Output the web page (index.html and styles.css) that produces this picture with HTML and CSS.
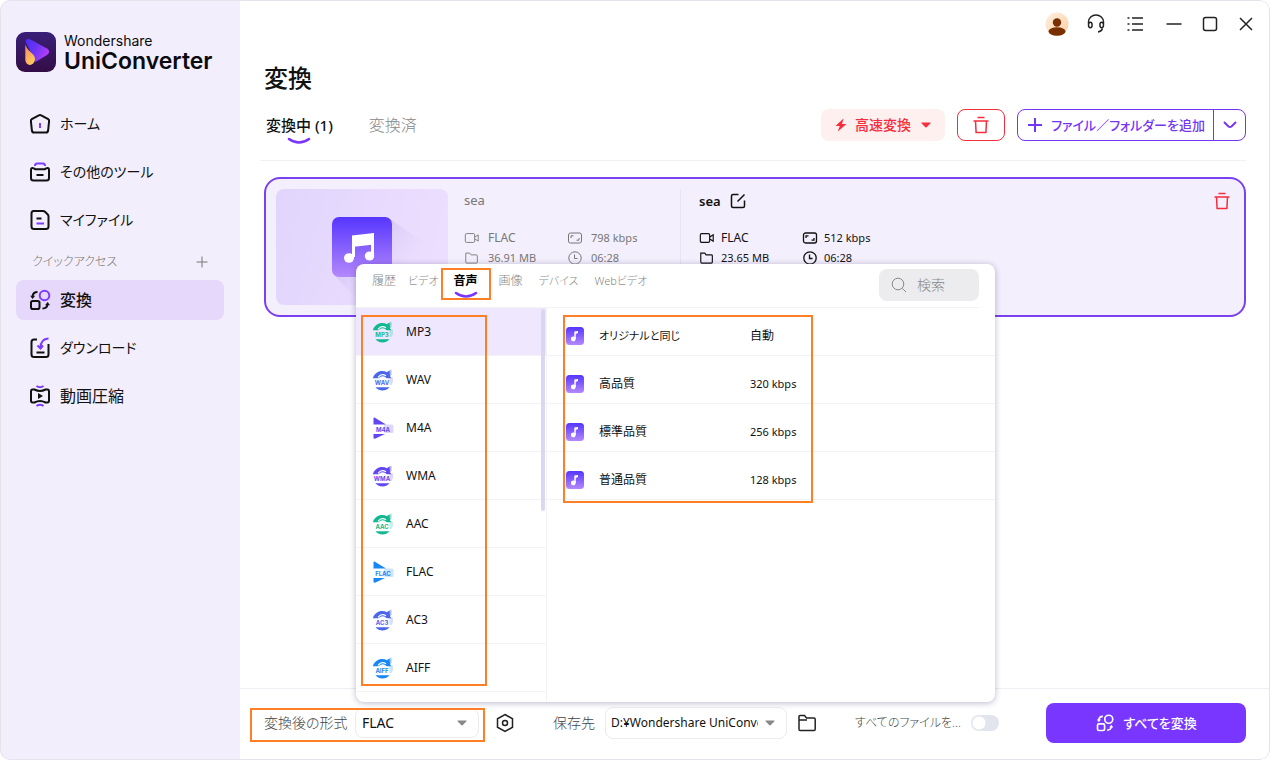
FILE: index.html
```html
<!DOCTYPE html>
<html lang="ja">
<head>
<meta charset="utf-8">
<meta name="viewport" content="width=device-width, initial-scale=1">
<title>Wondershare UniConverter</title>
<link rel="stylesheet" href="styles.css">
</head>
<body>
<svg class="defs" aria-hidden="true">
  <defs>
    <linearGradient id="g-note" x1="0" y1="0" x2="0" y2="1"><stop offset="0" stop-color="#5636ff"/><stop offset="1" stop-color="#b488fb"/></linearGradient>
    <linearGradient id="g-logo" x1="0" y1="0" x2="0" y2="1"><stop offset="0" stop-color="#3a1f78"/><stop offset="1" stop-color="#330d45"/></linearGradient>
    <linearGradient id="g-play" x1="0" y1="0" x2="1" y2="0.5"><stop offset="0" stop-color="#4a2bf0"/><stop offset="0.5" stop-color="#6b35f5"/><stop offset="1" stop-color="#b43cf5"/></linearGradient>
    <linearGradient id="g-drop" x1="0" y1="0" x2="0.6" y2="1"><stop offset="0" stop-color="#f0875c"/><stop offset="1" stop-color="#ffc860"/></linearGradient>
    <linearGradient id="g-shade" x1="0" y1="0" x2="1" y2="0.8"><stop offset="0.2" stop-color="#9d86d8" stop-opacity="0.3"/><stop offset="0.65" stop-color="#c9b5ee" stop-opacity="0"/></linearGradient>
    <linearGradient id="g-face" x1="0" y1="0" x2="1" y2="1"><stop offset="0" stop-color="#fff0e0"/><stop offset="1" stop-color="#ffcfa3"/></linearGradient>
  </defs>
  <symbol id="i-trash" viewBox="0 0 20 20"><path d="M6.500 2.500h7M2.500 6h15M4.500 6l.6 11.500h9.800L15.500 6" fill="none" stroke="currentColor" stroke-width="1.500"/></symbol>
  <symbol id="i-convert" viewBox="0 0 24 24"><rect x="3" y="13" width="8.500" height="8" rx="1.800" fill="none" stroke="currentColor" stroke-width="2"/><circle class="accent" cx="16.500" cy="7.500" r="4.800" fill="none" stroke-width="2"/><path d="M4.500 8.500C4.800 5.800 6.500 4 9.500 4M14.500 20.500c3 0 4.700-1.300 5-4" fill="none" stroke="currentColor" stroke-width="2"/><path d="M2.200 7.800h5L4.500 11zM17 17.300h5L19.700 14z" fill="currentColor" stroke="none"/></symbol>
  <symbol id="i-video" viewBox="0 0 18 14"><rect x="1.500" y="2" width="10.500" height="10" rx="1.500"/><path d="M12 6l4-2.500v7L12 8"/></symbol>
  <symbol id="i-folder" viewBox="0 0 18 14"><path d="M2 1.500h4.500l1.500 2h6a1 1 0 0 1 1 1v7a1.200 1.200 0 0 1-1.200 1.200H3A1.200 1.200 0 0 1 2 11.500z"/></symbol>
  <symbol id="i-rate" viewBox="0 0 16 14"><rect x="1.500" y="2" width="13" height="10" rx="2"/><path d="M4 7V4.800h2.500M12 7v2.200H9.500"/></symbol>
  <symbol id="i-clock" viewBox="0 0 14 14"><circle cx="7" cy="7" r="6.200"/><path d="M6.500 3.500v4h3"/></symbol>
  <symbol id="i-smile" viewBox="0 0 24 8"><path d="M2 2q10 7 20 0" fill="none" stroke="#7a35ff" stroke-width="2.600" stroke-linecap="round"/></symbol>
  <symbol id="i-caret" viewBox="0 0 10 6"><path d="M.8.500h8.400a.5.500 0 0 1 .3.800L5.600 5.200a.9.900 0 0 1-1.200 0L.5 1.300a.5.500 0 0 1 .3-.8z" fill="currentColor"/></symbol>
  <symbol id="i-note" viewBox="0 0 18 18"><rect width="18" height="18" rx="3.500" fill="url(#g-note)"/><circle cx="7.300" cy="12" r="2.400" fill="#fff"/><path d="M8.300 12V4.500L12 4v2.300l-2.200.500V12z" fill="#fff"/></symbol>
  <symbol id="i-disc" viewBox="0 0 22 22"><path d="M.8 9.300C2.500 3 9.500.3 15 3.200L17.500 1.500 18 7.500l1.500 1.700h-4.800C12.500 6.500 9 6.500 6.500 9.300z" fill="currentColor"/><path d="M6 8.300c2-2.600 5-3.300 8-1.600" fill="none" stroke="#fff" stroke-width="1.200"/><path d="M17.500 8.500H21q.7 4.500-1.500 7.500h-2z" fill="currentColor" opacity=".22"/><path d="M14 3.500l5.500-3v5l-1.500 2.500z" fill="currentColor" opacity=".45"/><path d="M3.500 18.200h14q-3 3.300-7 3.300t-7-3.300z" fill="currentColor"/></symbol>
  <symbol id="i-play" viewBox="0 0 22 22"><path d="M1.500 1.300q0-1 1-.8L14 7.500H1.500zM1.500 17H13L3.500 21.500q-1.500.500-2-.5z" fill="currentColor"/><rect x="12" y="7.500" width="9.500" height="8.500" rx="1.500" fill="currentColor" opacity=".22"/></symbol>
</svg>

<div class="window">
  <aside class="sidebar">
    <div class="brand">
      <svg class="brand-mark" viewBox="0 0 40 40" aria-hidden="true"><rect width="40" height="40" rx="9" fill="url(#g-logo)"/><path d="M9.500 9.500q1-4 5-2L31 16.500q4.500 3 0 6.500L19.500 30z" fill="url(#g-play)"/><path d="M9.300 12.500V27c0 8 9 7.500 9.700.5.500-6-7-7-9.700-15z" fill="url(#g-drop)"/></svg>
      <div class="brand-text"><span class="brand-top">Wondershare</span><span class="brand-name">UniConverter</span></div>
    </div>
    <nav class="nav">
      <a class="nav-item kana" href="#"><svg viewBox="0 0 24 24"><path d="M10.800 3.300q1.200-.7 2.400 0l7 3.900q1.100.7.900 2l-1 9.300q-.3 2-2.100 2H6q-1.800 0-2.100-2l-1-9.300q-.2-1.300.9-2z"/><path class="accent" d="M12 11v5"/></svg>ホーム</a>
      <a class="nav-item kana" href="#"><svg viewBox="0 0 24 24"><path class="accent" d="M7 6c0-2 .7-2.500 2-2.500h6c1.300 0 2 .5 2 2.500"/><path d="M4.500 8q1.500 0 2.700 1.300h9.600Q18 8 19.500 8 21 8 21 10v8q0 2.500-2.500 2.500h-13Q3 20.500 3 18v-8q0-2 1.500-2zM8.500 15h7"/></svg>その他のツール</a>
      <a class="nav-item kana" href="#"><svg viewBox="0 0 24 24"><path d="M5.500 3h9.500q1.200 0 2 .8l2.500 2.500q1 1 1 2v10.200q0 2.500-2.500 2.500H6q-2.500 0-2.500-2.500V5.500Q3.500 3 5.500 3zM8.500 10.500h5"/><path class="accent" d="M8.500 15.500H16"/></svg>マイファイル</a>
      <div class="nav-head"><span>クイックアクセス</span><button class="plain" aria-label="追加"><svg class="plus" viewBox="0 0 12 12"><path d="M6 .5v11M.5 6h11"/></svg></button></div>
      <a class="nav-item active" href="#" aria-current="page"><svg><use href="#i-convert"/></svg>変換</a>
      <a class="nav-item kana" href="#"><svg viewBox="0 0 24 24"><path d="M9 3.500H6Q3.500 3.500 3.500 6v12.500Q3.500 21 6 21h12q2.500 0 2.500-2.500V8M8.500 16.500h8"/><path class="accent" d="M20.500 2.500c-5.500.3-8 3-8 9.500M9.500 9.500l3 3 2.500-3"/></svg>ダウンロード</a>
      <a class="nav-item" href="#"><svg viewBox="0 0 24 24"><path d="M4.500 5.500h2q5.500 3 11 0h2Q21 5.500 21 7.500v9q0 2-1.500 2h-2q-5.500-3-11 0h-2Q3 18.500 3 16.500v-9q0-2 1.500-2z"/><path d="M10 9v6l5-3z" fill="currentColor" stroke="none"/><path class="accent" d="M8.500 2q3.500 2.500 7 0M8.500 22q3.500-2.500 7 0"/></svg>動画圧縮</a>
    </nav>
  </aside>

  <main class="main">
    <div class="titlebar">
      <button class="tool" aria-label="アカウント"><svg viewBox="0 0 24 24"><circle cx="12" cy="12" r="11.500" fill="url(#g-face)"/><circle cx="12" cy="10.500" r="4.200" fill="#7a2f00"/><ellipse cx="12" cy="19.500" rx="8.500" ry="4.200" fill="#7a2f00"/></svg></button>
      <button class="tool" aria-label="サポート"><svg class="line" viewBox="0 0 24 24"><path d="M4.500 11.500V10a7.500 7 0 0 1 15 0v1.500"/><ellipse cx="6.300" cy="13" rx="1.800" ry="2.700"/><ellipse cx="17.700" cy="13" rx="1.800" ry="2.700"/><path d="M18.500 16.500q-1 3-4.500 3.500"/></svg></button>
      <button class="tool" aria-label="メニュー"><svg class="line" viewBox="0 0 24 24"><path d="M9 6h11M9 12h11M9 18h11M4.500 6h2M4.500 12h2M4.500 18h2"/></svg></button>
      <div class="win-buttons">
        <button class="tool" aria-label="最小化"><svg class="line" viewBox="0 0 24 24"><path d="M4.500 12h15"/></svg></button>
        <button class="tool" aria-label="最大化"><svg class="line" viewBox="0 0 24 24"><rect x="5.500" y="5.500" width="13" height="13" rx="2"/></svg></button>
        <button class="tool" aria-label="閉じる"><svg class="line" viewBox="0 0 24 24"><path d="M6 6l12 12M18 6L6 18"/></svg></button>
      </div>
    </div>

    <header class="page-head">
      <h1>変換</h1>
      <div class="head-row">
        <div class="tabs">
          <button class="tab on">変換中 (1)<svg><use href="#i-smile"/></svg></button>
          <button class="tab">変換済</button>
        </div>
        <div class="actions">
          <button class="btn fast"><svg class="bolt" viewBox="0 0 12 14"><path d="M8.500.5L.5 8h4.300L2.800 13.500 11.500 6H7z" fill="currentColor"/></svg>高速変換<svg class="caret"><use href="#i-caret"/></svg></button>
          <button class="btn del" aria-label="すべて削除"><svg class="trash"><use href="#i-trash"/></svg></button>
          <div class="split">
            <button class="split-main"><svg class="plus-lg" viewBox="0 0 14 14"><path d="M7 0v14M0 7h14"/></svg>ファイル／フォルダーを追加</button>
            <button class="split-drop" aria-label="その他の追加方法"><svg viewBox="0 0 14 8"><path d="M1 1l4.500 4.500q1.500 1 3 0L13 1"/></svg></button>
          </div>
        </div>
      </div>
    </header>

    <section class="content">
      <article class="card">
        <div class="thumb">
          <svg viewBox="0 0 172 116" preserveAspectRatio="xMidYMid slice" aria-hidden="true"><path d="M114 30l58 40v46H86L58 86z" fill="url(#g-shade)"/><rect x="56" y="28" width="60" height="60" rx="7" fill="url(#g-note)"/><path d="M76 46.500l22-2.500v11.500l-22 2.500z" fill="#fff"/><path d="M77.500 50v18M96.500 50v16" stroke="#fff" stroke-width="3"/><ellipse cx="73" cy="69" rx="5" ry="4.800" fill="#fff"/><ellipse cx="93.500" cy="67" rx="4.700" ry="4.500" fill="#fff"/></svg>
        </div>
        <div class="source">
          <h2>sea</h2>
          <dl class="facts">
            <div><dt><svg><use href="#i-video"/></svg></dt><dd class="codec">FLAC</dd></div><div><dt><svg><use href="#i-rate"/></svg></dt><dd>798 kbps</dd></div>
            <div><dt><svg><use href="#i-folder"/></svg></dt><dd>36.91 MB</dd></div><div><dt><svg><use href="#i-clock"/></svg></dt><dd>06:28</dd></div>
          </dl>
        </div>
        <div class="target">
          <h2>sea <button class="plain" aria-label="名前を変更"><svg class="edit" viewBox="0 0 16 16"><path d="M8.500 1.500H3Q1.500 1.500 1.500 3v10q0 1.500 1.500 1.500h10q1.500 0 1.500-1.500V7.500M7.500 8.500L14.500 1.500"/></svg></button></h2>
          <dl class="facts">
            <div><dt><svg><use href="#i-video"/></svg></dt><dd class="codec">FLAC</dd></div><div><dt><svg><use href="#i-rate"/></svg></dt><dd>512 kbps</dd></div>
            <div><dt><svg><use href="#i-folder"/></svg></dt><dd>23.65 MB</dd></div><div><dt><svg><use href="#i-clock"/></svg></dt><dd>06:28</dd></div>
          </dl>
        </div>
        <button class="plain card-del" aria-label="削除"><svg class="trash"><use href="#i-trash"/></svg></button>
      </article>
    </section>

    <footer class="footer">
      <div class="format marked">
        <label for="fmt">変換後の形式</label>
        <span class="select"><select id="fmt"><option>FLAC</option></select><svg class="caret"><use href="#i-caret"/></svg></span>
      </div>
      <button class="plain gear" aria-label="設定"><svg class="line" viewBox="0 0 20 20"><path d="M10 1.500l7.500 4.300v8.400L10 18.500l-7.500-4.300V5.800z"/><circle cx="10" cy="10" r="2.500"/></svg></button>
      <div class="dest">
        <label for="dest">保存先</label>
        <span class="select path"><select id="dest"><option>D:¥Wondershare UniConverter</option></select><svg class="caret"><use href="#i-caret"/></svg></span>
        <button class="plain" aria-label="フォルダーを開く"><svg class="line" viewBox="0 0 20 20"><path d="M2 3.500q0-1 1-1h4.500L9.500 5H17q1.200 0 1.200 1.200v10q0 1.300-1.200 1.300H3.200Q2 17.500 2 16.200zM2 7h8"/></svg></button>
      </div>
      <label class="merge"><span>すべてのファイルを...</span><input type="checkbox" class="switch"></label>
      <button class="primary"><svg><use href="#i-convert"/></svg>すべてを変換</button>
    </footer>

    <div class="popup" role="dialog" aria-label="形式の選択">
      <div class="pop-head">
        <div class="pop-tabs">
          <button>履歴</button><button class="kana">ビデオ</button><button class="on marked">音声<svg><use href="#i-smile"/></svg></button><button>画像</button><button class="kana">デバイス</button><button class="kana">Webビデオ</button>
        </div>
        <label class="search"><svg viewBox="0 0 16 16"><circle cx="7" cy="7" r="5.800"/><path d="M11.500 11.500L15 15"/></svg><input type="text" placeholder="検索" aria-label="検索"></label>
      </div>
      <div class="pop-body">
        <ul class="formats">
          <li class="on"><svg class="c-green" viewBox="0 0 22 22"><use href="#i-disc"/><text x="10" y="15.500">MP3</text></svg>MP3</li>
          <li><svg class="c-blue" viewBox="0 0 22 22"><use href="#i-disc"/><text x="10" y="15.500">WAV</text></svg>WAV</li>
          <li><svg class="c-violet" viewBox="0 0 22 22"><use href="#i-play"/><text x="11" y="14.500">M4A</text></svg>M4A</li>
          <li><svg class="c-violet" viewBox="0 0 22 22"><use href="#i-disc"/><text x="10" y="15.500">WMA</text></svg>WMA</li>
          <li><svg class="c-green" viewBox="0 0 22 22"><use href="#i-disc"/><text x="10" y="15.500">AAC</text></svg>AAC</li>
          <li><svg class="c-sky" viewBox="0 0 22 22"><use href="#i-play"/><text x="11" y="14.500">FLAC</text></svg>FLAC</li>
          <li><svg class="c-blue" viewBox="0 0 22 22"><use href="#i-disc"/><text x="10" y="15.500">AC3</text></svg>AC3</li>
          <li><svg class="c-sky" viewBox="0 0 22 22"><use href="#i-disc"/><text x="10" y="15.500">AIFF</text></svg>AIFF</li>
        </ul>
        <table class="quality">
          <tbody>
            <tr><td class="q-icon"><svg><use href="#i-note"/></svg></td><td>オリジナルと同じ</td><td class="kanji">自動</td></tr>
            <tr><td class="q-icon"><svg><use href="#i-note"/></svg></td><td class="kanji">高品質</td><td>320 kbps</td></tr>
            <tr><td class="q-icon"><svg><use href="#i-note"/></svg></td><td class="kanji">標準品質</td><td>256 kbps</td></tr>
            <tr><td class="q-icon"><svg><use href="#i-note"/></svg></td><td class="kanji">普通品質</td><td>128 kbps</td></tr>
          </tbody>
        </table>
      </div>
    </div>
  </main>
</div>
</body>
</html>
```

FILE: styles.css
```css
*, *::before, *::after { box-sizing: border-box; }

body {
  margin: 0;
  background: #fff;
  color: #111;
  font: 12px/16px "Noto Sans", "Noto Sans CJK JP", sans-serif;
  font-feature-settings: "palt";
}

h1, h2, dl, dd, ul { margin: 0; padding: 0; }
button, input, select { font: inherit; font-feature-settings: inherit; color: inherit; }
button { border: 0; background: none; padding: 0; cursor: pointer; }
svg { display: block; flex: none; }
.defs { position: absolute; width: 0; height: 0; }
.plain { display: inline-flex; }
.line { fill: none; stroke: #222; stroke-width: 1.5; }
.caret { width: 10px; height: 6px; }
.trash { width: 20px; height: 20px; }

.window {
  position: relative;
  display: flex;
  min-height: 100vh;
  border-radius: 10px;
  overflow: hidden;
}
.window::after {
  content: "";
  position: absolute;
  inset: 0;
  border: 1px solid #e4e2ea;
  border-radius: 10px;
  pointer-events: none;
}

/* sidebar */
.sidebar { width: 240px; flex: none; padding: 32px 16px; background: #f2eefb; }
.brand { display: flex; gap: 8px; }
.brand-mark { width: 40px; height: 40px; }
.brand-text { display: flex; flex-direction: column; font-family: Inter, sans-serif; color: #0b0b0f; }
.brand-top { font-size: 14px; line-height: 18px; }
.brand-name { font-size: 23px; line-height: 22px; font-weight: 600; }
.nav { display: flex; flex-direction: column; gap: 8px; margin-top: 32px; }
.nav-item {
  display: flex;
  align-items: center;
  gap: 8px;
  height: 40px;
  padding: 0 12px;
  border-radius: 8px;
  font-size: 16px;
  color: #111;
  text-decoration: none;
}
.nav-item.kana { font-size: 14px; }
.nav-item svg { width: 24px; height: 24px; fill: none; stroke: currentColor; stroke-width: 2; }
.nav-item .accent, #i-convert .accent { stroke: var(--accent, #7d3cff); }
.nav-item.active { background: #e6d8fb; font-weight: 500; }
.nav-head {
  display: flex;
  justify-content: space-between;
  align-items: center;
  height: 28px;
  margin-bottom: -4px;
  padding: 0 16px;
  font-size: 12px;
  font-weight: 300;
  color: #777;
}
.plus { width: 12px; height: 12px; stroke: #777; }

/* main */
.main { position: relative; flex: 1; min-width: 0; display: flex; flex-direction: column; }
.titlebar { display: flex; justify-content: flex-end; gap: 15px; padding: 12px 12px 0; }
.win-buttons { display: flex; gap: 12px; }
.tool svg { width: 24px; height: 24px; }
.page-head { margin: 24px 24px 0 20px; padding: 0 0 19px 4px; border-bottom: 1px solid #f1f0f3; }
h1 { font-size: 24px; line-height: 36px; font-weight: 500; }
.head-row { display: flex; justify-content: space-between; align-items: center; margin-top: 13px; }
.tabs { display: flex; gap: 36px; padding-left: 2px; }
.tab { position: relative; font-size: 16px; line-height: 32px; font-weight: 300; color: #888; }
.tab.on { font-size: 15px; font-weight: 500; color: #111; }
.tab svg { position: absolute; left: 50%; bottom: -4px; width: 24px; height: 8px; transform: translateX(-50%); }
.actions { display: flex; gap: 12px; font-size: 14px; font-weight: 500; }
.btn { display: flex; align-items: center; justify-content: center; height: 32px; border-radius: 8px; }
.fast { gap: 8px; padding: 0 14px; background: #fff0f0; color: #f52d3c; }
.fast .bolt { width: 12px; height: 14px; }
.fast .caret { margin: 0 0 0 2px; }
.del { width: 48px; border: 1px solid #f52d3c; color: #f52d3c; }
.split { display: flex; height: 32px; border: 1px solid #7435f5; border-radius: 8px; color: #7435f5; }
.split svg { fill: none; stroke: currentColor; stroke-width: 2; }
.split-main { display: flex; align-items: center; gap: 9px; padding: 0 8px 0 10px; font-size: 13px; }
.plus-lg { width: 14px; height: 14px; }
.split-drop { width: 32px; display: grid; place-items: center; border-left: 1px solid #7435f5; }
.split-drop svg { width: 14px; height: 8px; }

.content { flex: 1; padding: 16px 24px 0; }
.card {
  display: flex;
  height: 140px;
  padding: 10px;
  border: 2px solid #7a42ee;
  border-radius: 16px;
  background: #f3effc;
}
.thumb { width: 172px; border-radius: 8px; overflow: hidden; background: linear-gradient(105deg, #e1d5fd, #eddffe); }
.thumb svg { width: 100%; height: 100%; }
.source { width: 233px; padding: 3px 0 0 16px; border-right: 1px solid #e8e4f3; color: #777; }
.card h2 { display: flex; align-items: center; gap: 9px; height: 16px; font-size: 13px; line-height: 16px; font-weight: 400; }
.target { flex: 1; padding: 4px 0 0 18px; }
.target h2 { font-weight: 600; }
.edit { width: 16px; height: 16px; fill: none; stroke: #111; stroke-width: 1.5; }
.facts { display: grid; grid-template-columns: 103px 103px; row-gap: 4px; margin-top: 22px; font-size: 11px; }
.target .facts { margin-top: 21px; }
.facts div { display: flex; align-items: center; gap: 8px; height: 16px; }
.target .facts div { gap: 6px; }
.facts svg { width: 16px; height: 14px; fill: none; stroke: currentColor; stroke-width: 1; }
.target .facts svg { stroke-width: 1.3; }
.facts .codec { font-size: 12px; }
.card-del { align-self: flex-start; padding: 2px; color: #f52d3c; }

/* footer */
.footer {
  display: flex;
  align-items: center;
  height: 72px;
  padding: 0 24px 4px 10px;
  border-top: 1px solid #efeef2;
  font-size: 14px;
  font-weight: 300;
  color: #444;
}
.marked { outline: 2px solid #ff7f27; outline-offset: -2px; }
.format { display: flex; align-items: center; justify-content: space-between; width: 235px; height: 34px; margin-top: 4px; padding: 0 6px 4px 14px; }
.select { display: grid; align-items: center; width: 124px; }
.select select, .select .caret { grid-area: 1 / 1; }
.select select {
  width: 100%;
  height: 30px;
  padding: 0 28px 0 6px;
  appearance: none;
  border: 1px solid #ececf0;
  border-radius: 8px;
  background: #fff;
  font-size: 14px;
  font-weight: 400;
  color: #111;
}
.select .caret { justify-self: end; margin-right: 12px; color: #888; pointer-events: none; z-index: 1; }
.gear { margin: 0 38px 0 10px; }
.footer .line { width: 20px; height: 20px; }
.dest { display: flex; align-items: center; gap: 10px; }
.select.path { width: 182px; }
.select.path select { height: 32px; padding-left: 5px; font-size: 12px; }
.merge { display: flex; align-items: center; gap: 10px; margin-left: 38px; font-size: 12px; }
.switch {
  width: 28px;
  height: 16px;
  margin: 0;
  appearance: none;
  border-radius: 8px;
  background: radial-gradient(circle at 8px 8px, #fff 6px, transparent 7px) #e2e4ee;
}
.primary {
  --accent: #fff;
  display: flex;
  align-items: center;
  justify-content: center;
  gap: 8px;
  width: 200px;
  height: 40px;
  margin-left: auto;
  border-radius: 8px;
  background: #7936ff;
  color: #fff;
  font-size: 13px;
  font-weight: 500;
}
.primary svg { width: 20px; height: 20px; }

/* format picker */
.popup {
  position: absolute;
  left: 116px;
  bottom: 58px;
  width: 639px;
  height: 438px;
  border-radius: 8px;
  background: #fff;
  box-shadow: 0 1px 6px rgba(60, 50, 100, .35);
  display: flex;
  flex-direction: column;
}
.pop-head { display: flex; justify-content: space-between; align-items: center; height: 44px; margin-right: 16px; padding: 0 0 2px 16px; border-bottom: 1px solid #f3f2f5; }
.pop-tabs { display: flex; align-self: flex-start; margin-top: 4px; font-weight: 300; color: #888; }
.pop-tabs button { height: 32px; padding: 0 0 6px; margin-right: 16px; }
.pop-tabs button:first-child { margin-right: 12px; }
.pop-tabs .kana { font-size: 11px; }
.pop-tabs .kana:nth-child(2) { margin-right: 2px; }
.pop-tabs .on { position: relative; padding: 0 13px 6px; margin-right: 8px; color: #000; font-weight: 700; }
.pop-tabs .on svg { position: absolute; left: 13px; bottom: 1px; width: 24px; height: 8px; }
.search { display: flex; align-items: center; gap: 10px; width: 100px; height: 32px; padding: 0 12px; border-radius: 8px; background: #ececee; }
.search svg { width: 16px; height: 16px; fill: none; stroke: #888; }
.search input { width: 50px; min-width: 0; padding: 0; border: 0; background: none; font-size: 14px; font-weight: 300; }
.search input::placeholder { color: #888; opacity: 1; }
.pop-body { display: flex; flex: 1; min-height: 0; }
.formats { position: relative; width: 191px; flex: none; border-right: 1px solid #f3f2f5; list-style: none; }
.formats::before { content: ""; position: absolute; right: 1px; top: 1px; width: 4px; height: 202px; border-radius: 2px; background: #dbd7f0; }
.formats::after { content: ""; position: absolute; left: 5px; top: 7px; width: 126px; height: 371px; border: 2px solid #ff7f27; pointer-events: none; }
.formats li { display: flex; align-items: center; gap: 12px; height: 48px; padding: 1px 0 0 16px; border-bottom: 1px solid #f3f2f5; }
.formats li.on { background: #efe7fd; }
.formats svg { width: 22px; height: 22px; }
.formats text { font: 700 6px Inter, sans-serif; text-anchor: middle; fill: currentColor; }
.c-green { color: #12b892; }
.c-blue { color: #4c66ea; }
.c-violet { color: #6248f0; }
.c-sky { color: #1687f5; }
.quality { position: relative; flex: 1; align-self: flex-start; border-collapse: collapse; display: block; }
.quality::after { content: ""; position: absolute; left: 16px; top: 7px; width: 250px; height: 188px; border: 2px solid #ff7f27; pointer-events: none; }
.quality tbody { display: block; }
.quality tr { display: grid; grid-template-columns: 33px 151px 1fr; align-items: center; height: 48px; padding: 9px 0 0 19px; border-bottom: 1px solid #f3f2f5; }
.quality td { padding: 0; font-size: 11px; }
.quality svg { width: 18px; height: 18px; }
.quality .kanji { font-size: 12px; }
```
